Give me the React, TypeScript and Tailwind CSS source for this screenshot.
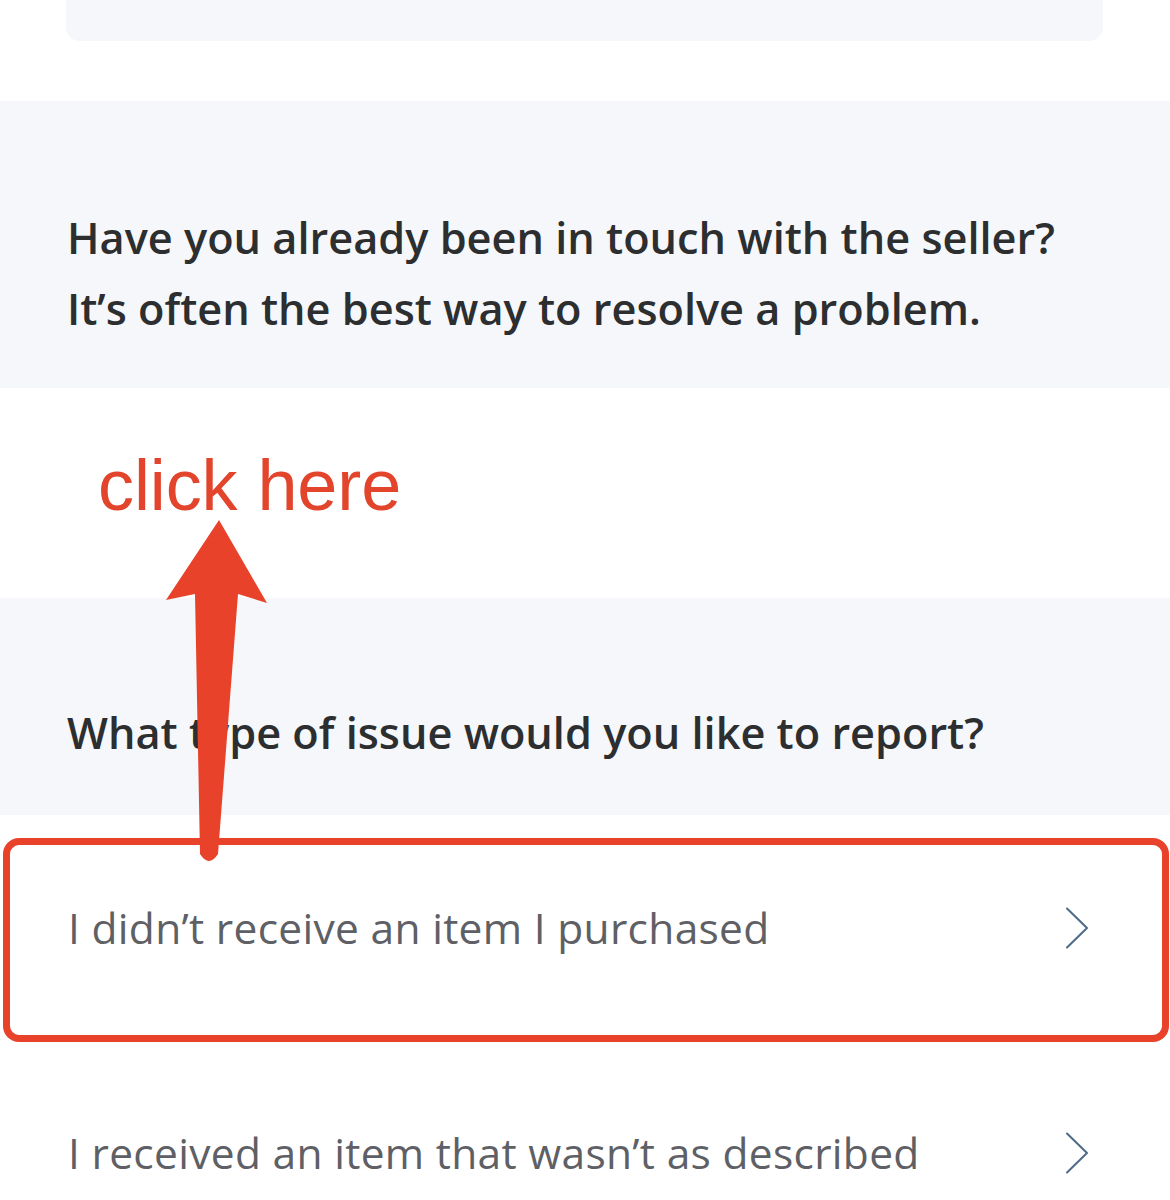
const sans = { fontFamily: '"Open Sans", "Noto Sans", sans-serif' }

function Chevron() {
  return (
    <svg width="24" height="42" viewBox="0 0 24 42" className="shrink-0">
      <polyline
        points="2,1.5 22,21 2,40.5"
        fill="none"
        stroke="#4d6a88"
        strokeWidth="2"
        strokeLinecap="round"
        strokeLinejoin="round"
      />
    </svg>
  )
}

function IssueRow({ label }: { label: string }) {
  return (
    <div className="flex h-[225px] items-center justify-between pl-[68px] pr-[81px]">
      <span className="text-[42.5px] tracking-[0.3px] text-[#5e6065]">{label}</span>
      <Chevron />
    </div>
  )
}

export default function App() {
  return (
    <div className="relative h-[1200px] w-[1170px] overflow-hidden bg-white" style={sans}>
      <div className="px-[66px]">
        <div className="h-[41px] w-[1037px] rounded-b-[14px] bg-[#f5f7fa]" />
      </div>

      <div className="mt-[60px] flex h-[287px] flex-col justify-center bg-[#f5f7fa] px-[67px] pt-[56px]">
        <p className="text-[43.3px] font-semibold leading-[71px] text-[#2c2e2f]">
          Have you already been in touch with the seller?
          <br />
          It’s often the best way to resolve a problem.
        </p>
      </div>

      <div className="h-[210px]" />

      <div className="flex h-[217px] items-end bg-[#f5f7fa] px-[67px] pb-[57px]">
        <h2 className="text-[43.3px] font-semibold leading-[50px] text-[#2c2e2f]">
          What type of issue would you like to report?
        </h2>
      </div>

      <IssueRow label="I didn’t receive an item I purchased" />
      <IssueRow label="I received an item that wasn’t as described" />

      {/* annotation overlay */}
      <span
        className="absolute left-[98px] top-[435px] text-[72px] leading-[100px] tracking-[-0.1px] text-[#e2452c]"
        style={{ fontFamily: '"Liberation Sans", Arial, sans-serif' }}
      >
        click here
      </span>

      <svg className="absolute left-0 top-0" width="1170" height="1200" viewBox="0 0 1170 1200">
        <path
          d="M219 520 L267 603 L238 594 L218 854 Q209 868 200 854 L195 594 L166 600 Z"
          fill="#e8422a"
        />
      </svg>

      <div className="absolute left-[3px] top-[838px] h-[204px] w-[1166px] rounded-[16px] border-[7px] border-[#e8422a]" />
    </div>
  )
}
